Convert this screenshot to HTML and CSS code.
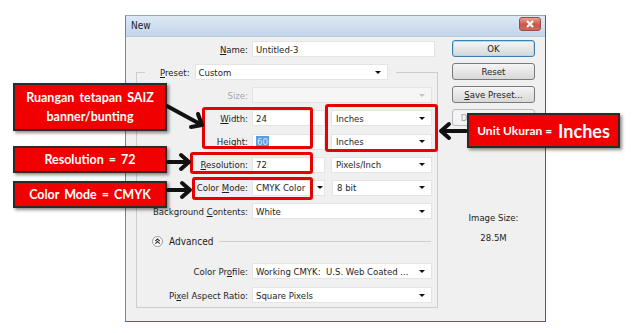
FILE: index.html
```html
<!DOCTYPE html>
<html lang="ms">
<head>
    <meta charset="UTF-8">
    <title>New</title>
    <link rel="stylesheet" href="styles.css">
</head>
<body>
    <div class="dialog">
        <div class="titlebar">
            <span class="title">New</span>
            <span class="close">
                <svg width="10" height="8" viewBox="0 0 10 8"><path d="M2 1 L8 7 M8 1 L2 7" stroke="#fff" stroke-width="2"/></svg>
            </span>
        </div>
        <div class="dialog-body">
            <div class="form">
                <div class="row name-row">
                    <span class="lbl"><u>N</u>ame:</span>
                    <span class="field name-field">Untitled-3</span>
                </div>
                <fieldset class="group">
                    <legend class="preset">
                        <span class="preset-lbl"><u>P</u>reset:</span>
                        <span class="field select preset-field"><span>Custom</span><i class="arrow"></i></span>
                    </legend>
                    <div class="row">
                        <span class="lbl off">Size:</span>
                        <span class="field select full off"><span></span><i class="arrow"></i></span>
                    </div>
                    <div class="row">
                        <span class="lbl"><u>W</u>idth:</span>
                        <span class="field num">24</span>
                        <span class="field select unit"><span>Inches</span><i class="arrow"></i></span>
                    </div>
                    <div class="row">
                        <span class="lbl">Hei<u>g</u>ht:</span>
                        <span class="field num"><span class="sel">60</span></span>
                        <span class="field select unit"><span>Inches</span><i class="arrow"></i></span>
                    </div>
                    <div class="row">
                        <span class="lbl"><u>R</u>esolution:</span>
                        <span class="field num">72</span>
                        <span class="field select unit"><span>Pixels/Inch</span><i class="arrow"></i></span>
                    </div>
                    <div class="row">
                        <span class="lbl">Color <u>M</u>ode:</span>
                        <span class="field select mode"><span>CMYK Color</span><i class="arrow"></i></span>
                        <span class="field select bits"><span>8 bit</span><i class="arrow"></i></span>
                    </div>
                    <div class="row">
                        <span class="lbl">Background <u>C</u>ontents:</span>
                        <span class="field select full"><span>White</span><i class="arrow"></i></span>
                    </div>
                    <div class="advanced">
                        <svg width="11" height="11" viewBox="0 0 11 11">
                            <circle cx="5.5" cy="5.5" r="5" fill="#fbfbfb" stroke="#9a9a9a"/>
                            <path d="M3.3 5 L5.5 3 L7.7 5 M3.3 7.6 L5.5 5.6 L7.7 7.6" fill="none" stroke="#333" stroke-width="1.1"/>
                        </svg>
                        <span class="adv-text">Advanced</span>
                        <span class="adv-line"></span>
                    </div>
                    <div class="row profile-row">
                        <span class="lbl">Color Pr<u>o</u>file:</span>
                        <span class="field select full"><span>Working CMYK:&nbsp; U.S. Web Coated ...</span><i class="arrow"></i></span>
                    </div>
                    <div class="row pixel-row">
                        <span class="lbl">Pi<u>x</u>el Aspect Ratio:</span>
                        <span class="field select full"><span>Square Pixels</span><i class="arrow"></i></span>
                    </div>
                </fieldset>
            </div>
            <div class="side">
                <button class="btn default">OK</button>
                <button class="btn">Reset</button>
                <button class="btn"><u>S</u>ave Preset...</button>
                <button class="btn off">De<u>l</u>ete Preset...</button>
                <div class="image-size">
                    <div>Image Size:</div>
                    <div>28.5M</div>
                </div>
            </div>
        </div>
    </div>

    <div class="notes">
        <div class="mark mark-wh"></div>
        <div class="mark mark-unit"></div>
        <div class="mark mark-res"></div>
        <div class="mark mark-mode"></div>

        <div class="note note-size">Ruangan tetapan SAIZ<br>banner/bunting</div>
        <div class="note note-res">Resolution = 72</div>
        <div class="note note-mode">Color Mode = CMYK</div>
        <div class="note note-unit">Unit Ukuran = <span class="big">Inches</span></div>

        <svg class="arrows" width="635" height="333" viewBox="0 0 635 333">
            <g fill="none" stroke="#111" stroke-width="4" stroke-linecap="round" stroke-linejoin="round">
                <path d="M167 106 L200 124"/>
                <path d="M191 127 L202 125 L198 114"/>
                <path d="M168 162 L188 162"/>
                <path d="M181 155 L189 162 L181 169"/>
                <path d="M168 190 L189 190"/>
                <path d="M182 183 L190 190 L182 197"/>
                <path d="M466 131 L442 131"/>
                <path d="M449 124 L441 131 L449 138"/>
            </g>
        </svg>
    </div>
</body>
</html>
```

FILE: styles.css
```css
body {
    margin: 0;
    width: 635px;
    height: 333px;
    position: relative;
    overflow: hidden;
    background-color: #fff;
    font-family: "DejaVu Sans Condensed", "Liberation Sans", sans-serif;
    font-size: 9.5px;
    color: #1e1e1e;
}

/* окно диалога */
.dialog {
    margin: 15px 0 0 125px;
    width: 421px;
    height: 307px;
    box-sizing: border-box;
    border: 1px solid #2f6a92;
    border-top-color: #8fa9c4;
    border-left-color: #6b86a3;
    background-color: #f0f0f0;
}
.titlebar {
    height: 21px;
    display: flex;
    justify-content: space-between;
    padding: 0 4px 0 5px;
    background: linear-gradient(#dde8f5, #c3d5eb);
    border-bottom: 1px solid #b9c9dc;
    box-sizing: border-box;
}
.title {
    font-size: 10px;
    line-height: 20px;
    color: #222;
}
.close {
    width: 22px;
    height: 14px;
    margin-top: 1px;
    box-sizing: border-box;
    border: 1px solid #9c4a44;
    border-radius: 3px;
    background: linear-gradient(#e3a393, #c8574a 55%, #d06b5c);
    display: flex;
    align-items: center;
    justify-content: center;
}
.dialog-body {
    display: flex;
    padding-top: 4px;
}

/* левая колонка с полями */
.form {
    width: 319px;
}
.row {
    display: flex;
    align-items: center;
    height: 16px;
    margin-top: 7.2px;
}
.name-row {
    margin-top: 0;
}
.lbl {
    width: 111px;
    margin-right: 4px;
    text-align: right;
    white-space: nowrap;
}
.name-row .lbl {
    width: 122px;
}
.lbl.off {
    color: #a8a8a8;
}
.field {
    height: 16px;
    box-sizing: border-box;
    background-color: #fff;
    border: 1px solid #e4e4e4;
    padding: 0 4px 0 3px;
    display: flex;
    align-items: center;
    white-space: nowrap;
}
.field.off {
    background-color: #f6f6f6;
}
.arrow {
    margin-left: auto;
    width: 0;
    height: 0;
    border-left: 3px solid transparent;
    border-right: 3px solid transparent;
    border-top: 3px solid #111;
    margin-right: 2px;
}
.field.off .arrow {
    border-top-color: #c4c4c4;
}
.name-field {
    width: 183px;
}
.preset-field {
    width: 193px;
    margin-left: 5px;
}
.full {
    width: 180px;
}
.num {
    width: 73px;
}
.unit {
    width: 101px;
    margin-left: 6px;
}
.unit span,
.bits span {
    padding-left: 1px;
}
.mode {
    width: 73px;
    padding-right: 1px;
}
.mode .arrow {
    margin-right: 0;
}
.bits {
    width: 100px;
    margin-left: 7px;
}
.sel {
    background-color: #5b9be0;
    color: #d9eaff;
    padding: 0 1px;
}

/* рамка группы */
.group {
    margin: 7px 0 0 10px;
    padding: 0 0 4px 0;
    width: 302px;
    box-sizing: border-box;
    border: 1px solid #cdcdcd;
    min-width: 0;
}
.preset {
    display: flex;
    align-items: center;
    margin-left: 8px;
    padding: 0 8px 0 15px;
}
.advanced {
    display: flex;
    align-items: center;
    height: 16px;
    margin-top: 14px;
    padding-left: 15px;
}
.adv-text {
    margin-left: 6px;
    font-size: 10px;
}
.adv-line {
    width: 212px;
    margin-left: 6px;
    border-top: 1px solid #cfcfcf;
}
.profile-row {
    margin-top: 14px;
}
.pixel-row {
    margin-top: 8px;
}

/* правая колонка с кнопками */
.side {
    width: 83px;
    margin: -1px 0 0 7px;
}
.btn {
    display: block;
    width: 83px;
    height: 17px;
    margin-bottom: 6px;
    padding: 0;
    box-sizing: border-box;
    border: 1px solid #7a7a7a;
    border-radius: 3px;
    background: linear-gradient(#f5f5f5, #e6e6e6 50%, #d8d8d8);
    font-family: inherit;
    font-size: 9.5px;
    color: #1e1e1e;
}
.btn.default {
    border-color: #3c7fb1;
    box-shadow: inset 0 0 0 1px #a9dcf5;
}
.btn.off {
    color: #a6a6a6;
    border-color: #b9b9b9;
    background: #f4f4f4;
}
.image-size {
    margin-top: 82px;
    text-align: center;
    line-height: 20px;
}

/* слой с пояснениями поверх картинки */
.notes {
    position: absolute;
    left: 0;
    top: 0;
    width: 635px;
    height: 333px;
    pointer-events: none;
}
.arrows {
    position: absolute;
    left: 0;
    top: 0;
}
.mark {
    position: absolute;
    box-sizing: border-box;
    border: 3px solid #e60000;
    border-radius: 3px;
}
.mark-wh {
    left: 202px;
    top: 107px;
    width: 111px;
    height: 42px;
}
.mark-unit {
    left: 325px;
    top: 104px;
    width: 113px;
    height: 48px;
}
.mark-res {
    left: 190px;
    top: 152px;
    width: 123px;
    height: 22px;
}
.mark-mode {
    left: 192px;
    top: 177px;
    width: 121px;
    height: 23px;
}
.note {
    position: absolute;
    box-sizing: border-box;
    background-color: #f00000;
    border: 2px solid #2b2b2b;
    box-shadow: 2px 2px 3px rgba(0, 0, 0, 0.45);
    color: #fff;
    font-family: Lato, "Liberation Sans", sans-serif;
    font-weight: 700;
    font-size: 12.5px;
    text-align: center;
    display: flex;
    align-items: center;
    justify-content: center;
    word-spacing: 2px;
}
.note-size {
    left: 13px;
    top: 83px;
    width: 154px;
    height: 48px;
    line-height: 19px;
}
.note-res {
    left: 13px;
    top: 146px;
    width: 154px;
    height: 27px;
}
.note-mode {
    left: 13px;
    top: 181px;
    width: 154px;
    height: 27px;
}
.note-unit {
    left: 467px;
    top: 113px;
    width: 153px;
    height: 35px;
    word-spacing: 0;
    white-space: pre;
    font-size: 12px;
}
.note-unit .big {
    font-size: 18px;
    margin-left: 3px;
}
```
